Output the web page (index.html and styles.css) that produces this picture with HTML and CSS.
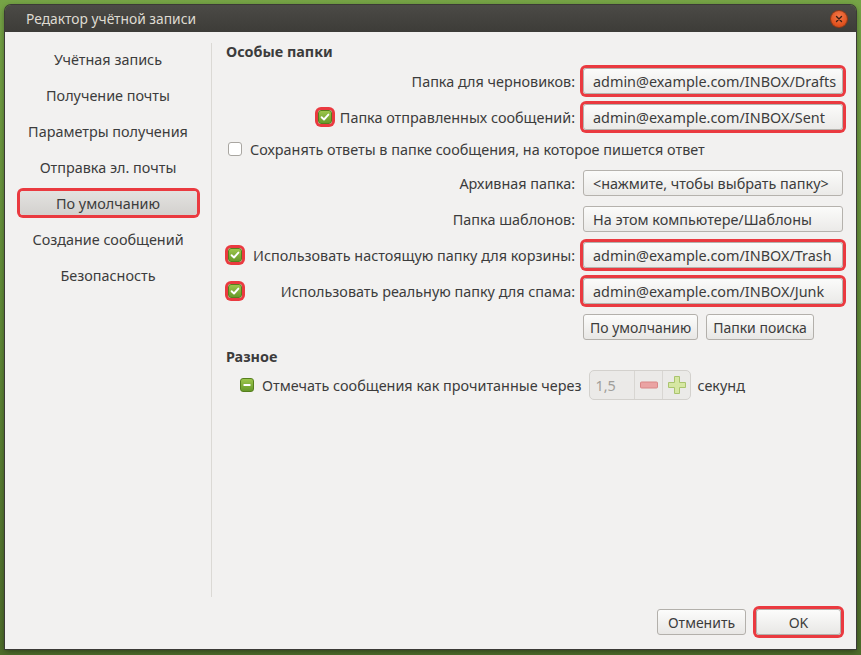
FILE: index.html
```html
<!DOCTYPE html>
<html lang="ru">
<head>
<meta charset="UTF-8" />
<meta name="viewport" content="width=device-width, initial-scale=1" />
<title>Редактор учётной записи</title>
<link rel="stylesheet" href="styles.css">
</head>
<body>

<div class="window">
  <div class="titlebar">
    <span class="title">Редактор учётной записи</span>
    <span class="close">
      <svg width="8" height="8" viewBox="0 0 8 8"><path d="M1.5 1.5 L6.5 6.5 M6.5 1.5 L1.5 6.5" stroke="#3a1f14" stroke-width="1.4" stroke-linecap="round"/></svg>
    </span>
  </div>

  <div class="content">
    <div class="panes">
      <div class="sidebar">
        <ul class="nav">
          <li><span>Учётная запись</span></li>
          <li><span>Получение почты</span></li>
          <li><span>Параметры получения</span></li>
          <li><span>Отправка эл. почты</span></li>
          <li class="active"><span class="hl">По умолчанию</span></li>
          <li><span>Создание сообщений</span></li>
          <li><span>Безопасность</span></li>
        </ul>
      </div>

      <div class="main">
        <h2>Особые папки</h2>

        <div class="row">
          <div class="label">Папка для черновиков:</div>
          <div class="field hl">admin@example.com/INBOX/Drafts</div>
        </div>

        <div class="row tight">
          <div class="label">
            <span class="check on hl"><svg width="12" height="12" viewBox="0 0 12 12"><path d="M2.6 6.2 L5 8.5 L9.4 3.6" fill="none" stroke="#fff" stroke-width="1.9" stroke-linecap="round" stroke-linejoin="round"/></svg></span>
            <span>Папка отправленных сообщений:</span>
          </div>
          <div class="field hl">admin@example.com/INBOX/Sent</div>
        </div>

        <div class="row short">
          <div class="opt"><span class="check"></span><span>Сохранять ответы в папке сообщения, на которое пишется ответ</span></div>
        </div>

        <div class="row">
          <div class="label">Архивная папка:</div>
          <div class="field">&lt;нажмите, чтобы выбрать папку&gt;</div>
        </div>

        <div class="row">
          <div class="label">Папка шаблонов:</div>
          <div class="field">На этом компьютере/Шаблоны</div>
        </div>

        <div class="row">
          <div class="label split">
            <span class="check on hl"><svg width="12" height="12" viewBox="0 0 12 12"><path d="M2.6 6.2 L5 8.5 L9.4 3.6" fill="none" stroke="#fff" stroke-width="1.9" stroke-linecap="round" stroke-linejoin="round"/></svg></span>
            <span>Использовать настоящую папку для корзины:</span>
          </div>
          <div class="field hl">admin@example.com/INBOX/Trash</div>
        </div>

        <div class="row">
          <div class="label split">
            <span class="check on hl"><svg width="12" height="12" viewBox="0 0 12 12"><path d="M2.6 6.2 L5 8.5 L9.4 3.6" fill="none" stroke="#fff" stroke-width="1.9" stroke-linecap="round" stroke-linejoin="round"/></svg></span>
            <span>Использовать реальную папку для спама:</span>
          </div>
          <div class="field hl">admin@example.com/INBOX/Junk</div>
        </div>

        <div class="row">
          <div class="label"></div>
          <div class="actions">
            <button class="btn">По умолчанию</button>
            <button class="btn">Папки поиска</button>
          </div>
        </div>

        <h2 class="misc">Разное</h2>

        <div class="row indent">
          <span class="check on"><svg width="12" height="12" viewBox="0 0 12 12"><rect x="2.5" y="5" width="7" height="2" rx="0.5" fill="#fff"/></svg></span>
          <span class="mark-text">Отмечать сообщения как прочитанные через</span>
          <div class="spin">
            <span class="spin-value">1,5</span>
            <span class="spin-btn">
              <svg width="18" height="8" viewBox="0 0 18 8"><rect x="0.5" y="1" width="17" height="6" rx="1" fill="#eaa3a3" stroke="#d98686"/></svg>
            </span>
            <span class="spin-btn">
              <svg width="18" height="18" viewBox="0 0 18 18"><path d="M6.5 0.5 H11.5 V6.5 H17.5 V11.5 H11.5 V17.5 H6.5 V11.5 H0.5 V6.5 H6.5 Z" fill="#d6e7a3" stroke="#aac46e"/></svg>
            </span>
          </div>
          <span class="unit">секунд</span>
        </div>
      </div>
    </div>

    <div class="footer">
      <button class="btn cancel">Отменить</button>
      <button class="btn ok hl">OK</button>
    </div>
  </div>
</div>

</body>
</html>
```

FILE: styles.css
```css
* {
  box-sizing: border-box;
}
html, body {
  margin: 0;
}
body {
  width: 861px;
  height: 655px;
  overflow: hidden;
  padding: 5px 0 0 5px;
  background: linear-gradient(180deg, #76a446 0%, #628d38 45%, #4e6d2b 100%);
  font-family: "Noto Sans", "DejaVu Sans", sans-serif;
  font-size: 14.4px;
  color: #3c3c3c;
}
.window {
  width: 851px;
  height: 644px;
  display: flex;
  flex-direction: column;
  border-radius: 6px 6px 0 0;
  box-shadow: 0 0 0 1px #3b3a36, 0 2px 6px rgba(0, 0, 0, 0.45);
  overflow: hidden;
}
.titlebar {
  height: 27px;
  flex: none;
  display: flex;
  align-items: center;
  justify-content: space-between;
  padding: 0 9px 0 21px;
  background: linear-gradient(180deg, #4b4a46, #3d3c38);
  color: #dfdbd2;
  font-size: 13.8px;
}
.close {
  width: 16px;
  height: 16px;
  border-radius: 50%;
  background: radial-gradient(circle at 50% 35%, #f57a4c, #e0501c 70%);
  box-shadow: 0 0 0 1px #9a3812;
  display: flex;
  align-items: center;
  justify-content: center;
}
.content {
  flex: 1;
  display: flex;
  flex-direction: column;
  background: #f2f1f0;
}
.panes {
  height: 565px;
  display: flex;
}
.sidebar {
  width: 207px;
  margin-top: 11px;
  border-right: 1px solid #dbd9d5;
}
.nav {
  list-style: none;
  margin: -2px 0 0;
  padding: 0;
}
.nav li {
  height: 36px;
  display: flex;
  align-items: center;
  justify-content: center;
}
.nav li.active span {
  width: 177px;
  height: 24px;
  display: flex;
  align-items: center;
  justify-content: center;
  border-radius: 3px;
  background: linear-gradient(180deg, #e3e2e0, #d3d1ce);
}
.hl {
  box-shadow: 0 0 0 3px #ea3a40;
}
.main {
  flex: 1;
  padding: 10px 13px 0 14px;
}
h2 {
  margin: 0 0 4px;
  font-size: 14.4px;
  font-weight: bold;
  line-height: 20px;
  color: #3c3c3c;
}
h2.misc {
  margin: -1px 0 3px;
}
.row {
  display: flex;
  align-items: center;
  height: 30px;
  margin-bottom: 6px;
}
.row.tight {
  margin-bottom: 4px;
}
.row.short {
  height: 26px;
}
.label {
  flex: 1;
  display: flex;
  align-items: center;
  justify-content: flex-end;
  gap: 8px;
  margin-right: 8px;
  white-space: nowrap;
}
.label.split {
  justify-content: space-between;
  padding-left: 2px;
}
.field {
  width: 260px;
  height: 26px;
  display: flex;
  align-items: center;
  padding-left: 9px;
  white-space: nowrap;
  overflow: hidden;
  border: 1px solid #b5b2ad;
  border-radius: 3px;
  background: linear-gradient(180deg, #fbfbfa, #ebeae8);
}
.check {
  width: 14px;
  height: 14px;
  flex: none;
  display: flex;
  align-items: center;
  justify-content: center;
  border: 1px solid #a9a6a1;
  border-radius: 3px;
  background: #fff;
}
.check.on {
  border-color: #567f1d;
  background: linear-gradient(180deg, #9cc64c, #66992a);
}
.opt {
  display: flex;
  align-items: center;
  gap: 8px;
  padding-left: 2px;
}
.actions {
  width: 260px;
  display: flex;
  gap: 8px;
}
.btn {
  height: 26px;
  padding: 0 6px;
  font-family: inherit;
  font-size: 14px;
  color: #3c3c3c;
  border: 1px solid #b3b0ab;
  border-radius: 3px;
  background: linear-gradient(180deg, #fcfcfb, #e8e7e5);
}
.indent {
  padding-left: 14px;
}
.mark-text {
  margin-left: 8px;
}
.spin {
  height: 30px;
  width: 102px;
  margin-left: 8px;
  display: flex;
  border: 1px solid #d3d1cd;
  border-radius: 5px;
  background: #ebeae8;
}
.spin-value {
  width: 45px;
  display: flex;
  align-items: center;
  padding-left: 5px;
  color: #a09e9a;
  border-right: 1px solid #d8d6d2;
}
.spin-btn {
  flex: 1;
  display: flex;
  align-items: center;
  justify-content: center;
}
.spin-btn + .spin-btn {
  border-left: 1px solid #d8d6d2;
}
.unit {
  margin-left: 6px;
}
.footer {
  flex: 1;
  display: flex;
  justify-content: flex-end;
  align-items: flex-start;
  gap: 10px;
  padding: 12px 15px 0 0;
}
.cancel {
  width: 89px;
}
.ok {
  width: 85px;
}
```
